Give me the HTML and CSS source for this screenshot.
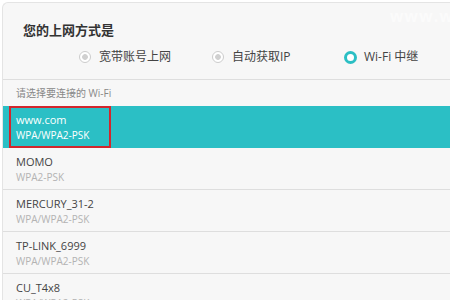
FILE: index.html
```html
<!DOCTYPE html>
<html lang="zh-CN">
<head>
    <meta charset="UTF-8">
    <meta name="viewport" content="width=device-width, initial-scale=1.0">
    <title>上网设置</title>
    <link rel="stylesheet" href="styles.css">
</head>
<body>
<div class="panel">
    <span class="watermark">www.w</span>
    <div class="mode">
        <h2 class="mode-title">您的上网方式是</h2>
        <div class="radios">
            <label class="radio"><span class="dot"></span>宽带账号上网</label>
            <label class="radio"><span class="dot"></span>自动获取IP</label>
            <label class="radio checked"><span class="dot"></span>Wi-Fi 中继</label>
        </div>
    </div>
    <div class="hint">
        <span>请选择要连接的 Wi-Fi</span>
        <a class="refresh">刷新</a>
    </div>
    <ul class="wifi-list">
        <li class="wifi selected">
            <span class="mark"></span>
            <div class="name">www.com</div>
            <div class="sec">WPA/WPA2-PSK</div>
        </li>
        <li class="wifi">
            <div class="name">MOMO</div>
            <div class="sec">WPA2-PSK</div>
        </li>
        <li class="wifi">
            <div class="name">MERCURY_31-2</div>
            <div class="sec">WPA/WPA2-PSK</div>
        </li>
        <li class="wifi">
            <div class="name">TP-LINK_6999</div>
            <div class="sec">WPA/WPA2-PSK</div>
        </li>
        <li class="wifi">
            <div class="name">CU_T4x8</div>
            <div class="sec">WPA/WPA2-PSK</div>
        </li>
    </ul>
</div>
</body>
</html>
```

FILE: styles.css
```css
html, body {
    overflow: hidden;
}
body {
    margin: 0;
    background: #fff;
    font-family: "Open Sans", "Noto Sans CJK SC", sans-serif;
    color: #444;
}
.panel {
    position: relative;
    margin: 2px 0 0 2px;
    border-top: 1px solid #e4e4e4;
    border-left: 1px solid #e4e4e4;
    border-top-left-radius: 6px;
    background: #f7f7f7;
}
.watermark {
    position: absolute;
    top: 2px;
    right: -4px;
    font-size: 16px;
    font-weight: bold;
    letter-spacing: 1px;
    color: #fbfbfb;
}
.mode {
    padding: 18px 0 13px 20px;
    border-bottom: 1px solid #dedede;
}
.mode-title {
    margin: 0;
    font-size: 13px;
    line-height: 18px;
    font-weight: bold;
    color: #333;
    font-family: "Noto Sans CJK SC", sans-serif;
}
.radios {
    display: flex;
    margin-top: 9px;
    padding-left: 56px;
}
.radio {
    display: flex;
    flex-shrink: 0;
    align-items: center;
    width: 133px;
    font-size: 12px;
    line-height: 18px;
    color: #444;
}
.dot {
    box-sizing: border-box;
    width: 12px;
    height: 12px;
    margin-right: 8px;
    border: 1.5px solid #cdcdcd;
    border-radius: 50%;
    background: radial-gradient(circle, #d0d0d0 0 2.5px, #fff 3.2px);
}
.radio.checked .dot {
    width: 13px;
    height: 13px;
    margin-left: -1px;
    margin-right: 7px;
    border: 3.5px solid #2bbfc4;
    background: #fff;
}
.hint {
    display: flex;
    justify-content: space-between;
    padding: 4px 0 4px 13px;
    font-size: 10px;
    line-height: 18px;
    color: #888;
}
.refresh {
    margin-right: -22px;
    color: #2bbfc4;
}
.wifi-list {
    margin: 0;
    padding: 0;
    list-style: none;
}
.wifi {
    position: relative;
    height: 42px;
    padding: 6px 0 0 13px;
    box-sizing: border-box;
    border-bottom: 1px solid #dedede;
}
.wifi.selected {
    background: #2bbfc5;
    border-bottom: 0;
}
.name {
    font-size: 11px;
    line-height: 16px;
    color: #444;
}
.sec {
    font-size: 10px;
    line-height: 15px;
    color: #b3b3b3;
}
.selected .name,
.selected .sec {
    color: #fff;
}
.mark {
    position: absolute;
    left: 6px;
    top: 0;
    width: 98px;
    height: 38px;
    border: 2px solid #d3262c;
}
```
